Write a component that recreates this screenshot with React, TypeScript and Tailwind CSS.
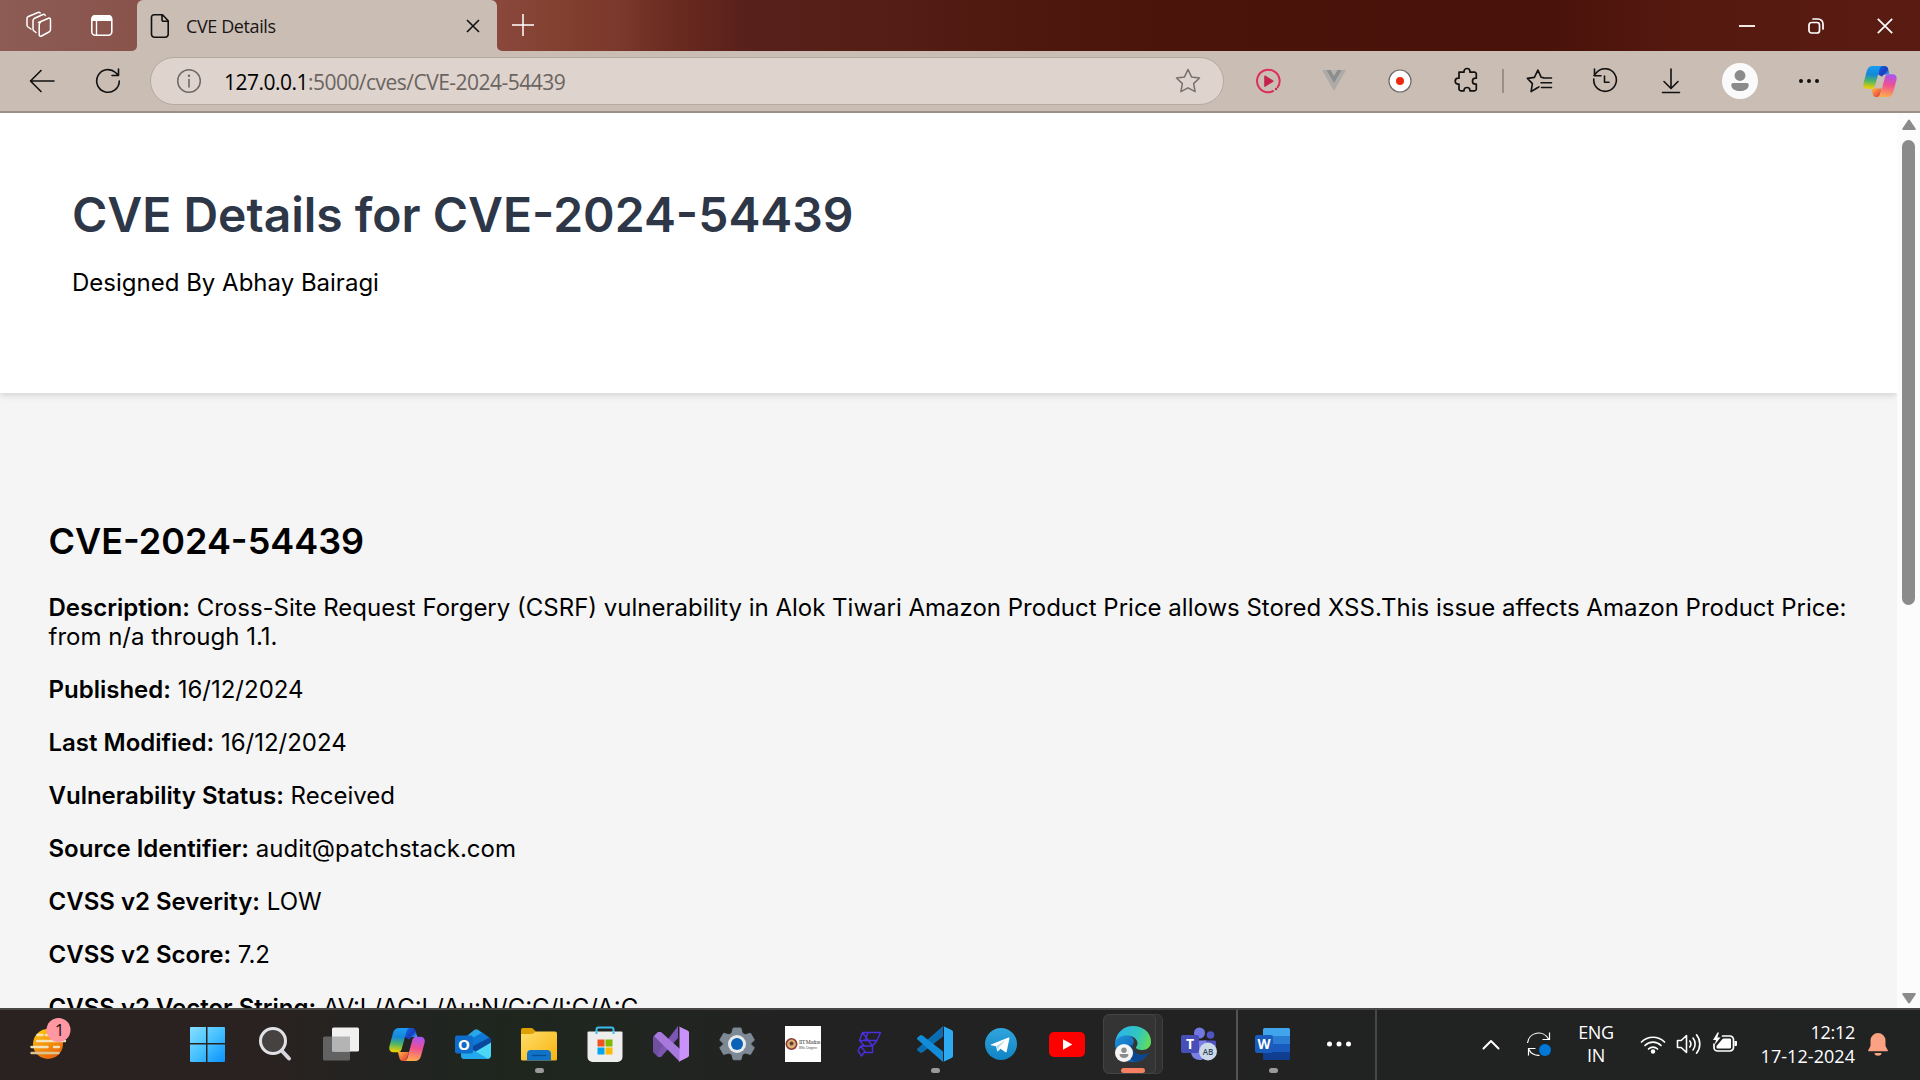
import React from 'react';

type SvgProps = { w: number; h: number; className?: string; children: React.ReactNode; box?: string };

function Svg({ w, h, className = '', children, box }: SvgProps) {
  return (
    <svg width={w} height={h} viewBox={box ?? `0 0 ${w} ${h}`} fill="none" className={`block shrink-0 ${className}`}>
      {children}
    </svg>
  );
}

const line = { strokeLinecap: 'round', strokeLinejoin: 'round' } as const;

function Copilot({ w, h, id, className }: { w: number; h: number; id: string; className?: string }) {
  return (
    <Svg w={w} h={h} box="0 0 36 33" className={className}>
      <defs>
        <linearGradient id={`${id}a`} x1="10" y1="1" x2="8" y2="24" gradientUnits="userSpaceOnUse">
          <stop offset="0" stopColor="#1a9bf0" />
          <stop offset="0.35" stopColor="#1487d8" />
          <stop offset="0.65" stopColor="#4fb566" />
          <stop offset="1" stopColor="#f5d000" />
        </linearGradient>
        <linearGradient id={`${id}b`} x1="28" y1="9" x2="24" y2="33" gradientUnits="userSpaceOnUse">
          <stop offset="0" stopColor="#a855f0" />
          <stop offset="0.45" stopColor="#ee4f94" />
          <stop offset="1" stopColor="#ffab4a" />
        </linearGradient>
        <linearGradient id={`${id}c`} x1="18" y1="1" x2="27" y2="9" gradientUnits="userSpaceOnUse">
          <stop offset="0" stopColor="#1260d8" />
          <stop offset="0.6" stopColor="#1a3cc0" />
          <stop offset="1" stopColor="#3aa8f5" />
        </linearGradient>
        <linearGradient id={`${id}d`} x1="10" y1="24" x2="18" y2="33" gradientUnits="userSpaceOnUse">
          <stop offset="0" stopColor="#ffb040" />
          <stop offset="1" stopColor="#e8363d" />
        </linearGradient>
      </defs>
      <path d="M17 0h6c2 0 3 1 3.600 3l1.700 6h-4.300c-2 0-3 .8-3.600 2.500L16 9z" fill={`url(#${id}c)`} />
      <path d="M9 24h8l3 0-2.500 7.500c-.4 1-1 1.500-2 1.500H14c-2 0-3-1-3.600-3z" fill={`url(#${id}d)`} />
      <path d="M10 0h11c-2 0-3 1.500-3.700 4l-4.600 17c-.6 2-1.700 3.300-4 3.300H4.500C1 24.300-.4 21.500.5 18L4 5C5 1.800 7 0 10 0z" fill={`url(#${id}a)`} />
      <path d="M26 33H15c2 0 3-1.500 3.700-4l4.600-17c.6-2 1.700-3.300 4-3.300h4.200c3.500 0 4.900 2.800 4 6.300l-3.500 13c-1 3.200-3 5-6 5z" fill={`url(#${id}b)`} />
    </Svg>
  );
}

function TabStrip() {
  return (
    <div className="flex h-[51px] w-full items-start bg-[linear-gradient(90deg,#8c5c55_0px,#89534b_137px,#8a483d_500px,#82402f_560px,#7b382c_620px,#69291f_680px,#57201a_750px,#541d15_900px,#4f180f_1020px,#4b140b_1180px,#48120a_1540px,#551910_1680px,#5a1c12_1920px)]">
      <Svg w={28} h={28} className="ml-[25px] mt-[11px]">
        <g stroke="#fff" strokeWidth="1.500" {...line}>
          <path d="M13.500 11.500l9.500-4a1.500 1.500 0 0 1 2.500 1.300v10c0 1-.6 1.700-1.500 2.200l-7.500 4a1.500 1.500 0 0 1-2.300-1.300v-9.800c0-1 .3-1.800 1.200-2.400z" />
          <path d="M11 21.500l-2-1.500c-.7-.5-1-1-1-2V9.500c0-1 .6-1.700 1.500-2.200L18 3.500c1-.5 2-.2 2.200 1" />
          <path d="M6 18l-3-2c-.7-.5-1-1-1-2V7.500c0-1 .5-1.600 1.400-2L13 1.500c1-.4 1.700-.2 2.200.5" />
        </g>
      </Svg>
      <Svg w={24} h={24} className="ml-[37px] mt-[13px]">
        <rect x="1.800" y="2.800" width="20" height="19.500" rx="3.500" stroke="#fff" strokeWidth="1.600" />
        <path d="M1.500 8V5.500a3.500 3.500 0 0 1 3.500-3.500h13.500a3.500 3.500 0 0 1 3.500 3.500V8z" fill="#fff" />
        <path d="M6.500 8v14" stroke="#fff" strokeWidth="1.400" />
      </Svg>
      <div className="ml-[18px] flex h-[51px] items-end">
        <Svg w={5} h={5}>
          <path d="M5 0v5H0a5 5 0 0 0 5-5z" fill="#cabdb4" />
        </Svg>
      </div>
      <div className="flex h-[51px] w-[360px] items-center rounded-t-[6px] bg-[#cabdb4]">
        <Svg w={20} h={26} className="ml-[13px]">
          <path d="M4 1.800h8.500l5.700 6v13.400a3 3 0 0 1-3 3H4.500a3 3 0 0 1-3-3V4.300A2.500 2.500 0 0 1 4 1.800z M12 2v4.500c0 1.200.7 1.800 1.800 1.800h4.200" stroke="#111" strokeWidth="1.600" {...line} />
        </Svg>
        <div className="ml-[16px] whitespace-nowrap font-['Open_Sans',sans-serif] text-[18px] leading-6 tracking-[-0.400px] text-[#181514]">CVE Details</div>
        <Svg w={14} h={14} className="ml-auto mr-[17px]">
          <path d="M1 1l12 12M13 1L1 13" stroke="#111" strokeWidth="1.600" />
        </Svg>
      </div>
      <div className="flex h-[51px] items-end">
        <Svg w={5} h={5}>
          <path d="M0 0v5h5a5 5 0 0 1-5-5z" fill="#cabdb4" />
        </Svg>
      </div>
      <Svg w={22} h={22} className="ml-[10px] mt-[14px]">
        <path d="M11 0v22M0 11h22" stroke="#fff" strokeWidth="1.500" />
      </Svg>
      <div className="ml-auto mr-[27px] mt-[17px] flex items-center">
        <Svg w={16} h={16}>
          <path d="M0 8h16" stroke="#fff" strokeWidth="1.800" />
        </Svg>
        <Svg w={17} h={17} className="ml-[53px]">
          <rect x="1" y="5.500" width="10.500" height="10.500" rx="2.500" stroke="#fff" strokeWidth="1.700" />
          <path d="M5 2h5a5 5 0 0 1 5 5v5" stroke="#fff" strokeWidth="1.700" strokeLinecap="round" />
        </Svg>
        <Svg w={16} h={16} className="ml-[52px]">
          <path d="M.8.8l14.400 14.400M15.200.8L.8 15.200" stroke="#fff" strokeWidth="1.700" />
        </Svg>
      </div>
    </div>
  );
}

function Toolbar() {
  return (
    <div className="flex h-[62px] w-full items-center border-b-2 border-[#9b8f88] bg-[#cabdb4]">
      <Svg w={26} h={24} className="ml-[29px]">
        <path d="M25 12H1.500M12 1.500L1.500 12 12 22.500" stroke="#111" strokeWidth="1.600" {...line} />
      </Svg>
      <Svg w={26} h={26} className="ml-[40px]">
        <path d="M24.300 13A11.300 11.300 0 1 1 20.500 4.500l2.500 2.500M23.500 1v6.500h-6.500" stroke="#111" strokeWidth="1.600" {...line} />
      </Svg>
      <div className="ml-[29px] flex h-[48px] w-[1074px] items-center rounded-full border border-[#b6a9a0] bg-[#ded3cd]">
        <Svg w={26} h={26} className="ml-[25px]">
          <circle cx="13" cy="13" r="11.300" stroke="#6f6965" strokeWidth="1.500" />
          <path d="M13 11.500v7.500" stroke="#6f6965" strokeWidth="1.600" strokeLinecap="round" />
          <circle cx="13" cy="7.800" r="1.200" fill="#6f6965" />
        </Svg>
        <div className="ml-[22px] mt-[1px] whitespace-nowrap font-['Open_Sans',sans-serif] text-[21px] leading-7 tracking-[-0.520px] text-[#6a6461]">
          <span className="text-black">127.0.0.1</span>:5000/cves/CVE-2024-54439
        </div>
        <Svg w={26} h={26} className="ml-auto mr-[22px]">
          <path d="M13 1.500l3.500 7.400 8 1.100-5.900 5.600 1.500 8.100L13 19.800l-7.100 3.900 1.500-8.100L1.500 10l8-1.100z" stroke="#77706c" strokeWidth="1.500" {...line} />
        </Svg>
      </div>
      <Svg w={26} h={26} className="ml-[31px]">
        <path d="M22.200 20A11.300 11.300 0 1 0 13 24.300c2 0 4-.5 5.800-1.600" stroke="#dc2f5a" strokeWidth="2" />
        <path d="M9.200 8v10.200c0 .6.500.8 1 .6l8-5c.5-.3.500-1 0-1.300l-8-5c-.5-.3-1 0-1 .5z" fill="#c4234f" />
        <circle cx="21" cy="21" r="1.200" fill="#c4234f" />
      </Svg>
      <Svg w={26} h={24} className="ml-[40px]">
        <path d="M1 1h24L13 22z" fill="#adaaa7" />
        <path d="M5.500 1h15L13 14z" fill="#8b8d8f" />
        <path d="M9.500 1h7L13 7z" fill="#bab3ad" />
      </Svg>
      <Svg w={24} h={24} className="ml-[41px]">
        <circle cx="12" cy="12" r="11" fill="#fff" stroke="#706965" strokeWidth="1.200" />
        <circle cx="12" cy="12" r="4" fill="#ee2b12" />
      </Svg>
      <Svg w={26} h={28} className="ml-[42px]">
        <path d="M5 5.200h5V4.500a3 3 0 0 1 6 0v.7h4.500a1.800 1.800 0 0 1 1.800 1.800v4.200h-.8a3 3 0 0 0 0 6h.8v4.800a1.800 1.800 0 0 1-1.800 1.800H16v-.3a3 3 0 0 0-6 0v.3H6.800A1.800 1.800 0 0 1 5 22v-4.800H4.200a3 3 0 0 1 0-6H5z" stroke="#111" strokeWidth="1.700" {...line} />
      </Svg>
      <div className="ml-[22px] h-6 w-[2px] bg-[#9b8f88]" />
      <Svg w={27} h={26} className="ml-[22px]">
        <path d="M17 9.600l-1.800-.3-3.300-7.200-3.500 7.300-7 1 5 5.200-1.300 8 6.300-3.800 1.500-1M17.500 10h8M15 14.800h10.500M15.500 19.500h10" stroke="#111" strokeWidth="1.600" {...line} />
      </Svg>
      <Svg w={26} h={26} className="ml-[39px]">
        <path d="M1.800 11a11.300 11.300 0 1 0 2.400-6L2 7.500M2.500 1v6.700H9M12.500 8v6.300h4.500" stroke="#111" strokeWidth="1.600" {...line} />
      </Svg>
      <Svg w={20} h={26} className="ml-[43px]">
        <path d="M10 1v19M3 13.500l7 7 7-7M1.500 24.500h17" stroke="#111" strokeWidth="1.600" {...line} />
      </Svg>
      <Svg w={36} h={36} className="ml-[41px]">
        <circle cx="18" cy="18" r="18" fill="#fbfafa" />
        <circle cx="18" cy="12.500" r="5.400" fill="#8b8b8b" />
        <path d="M11 20h14a1.700 1.700 0 0 1 1.700 1.700c0 4-3.500 6.300-8.700 6.300s-8.700-2.300-8.700-6.300A1.700 1.700 0 0 1 11 20z" fill="#8b8b8b" />
      </Svg>
      <Svg w={22} h={6} className="ml-[40px]">
        <circle cx="3" cy="3" r="2" fill="#111" />
        <circle cx="11" cy="3" r="2" fill="#111" />
        <circle cx="19" cy="3" r="2" fill="#111" />
      </Svg>
      <Copilot w={34} h={31} id="tb" className="ml-[43px]" />
    </div>
  );
}

const fields: [string, string][] = [
  ['Description:', 'Cross-Site Request Forgery (CSRF) vulnerability in Alok Tiwari Amazon Product Price allows Stored XSS.This issue affects Amazon Product Price: from n/a through 1.1.'],
  ['Published:', '16/12/2024'],
  ['Last Modified:', '16/12/2024'],
  ['Vulnerability Status:', 'Received'],
  ['Source Identifier:', 'audit@patchstack.com'],
  ['CVSS v2 Severity:', 'LOW'],
  ['CVSS v2 Score:', '7.2'],
  ['CVSS v2 Vector String:', 'AV:L/AC:L/Au:N/C:C/I:C/A:C'],
];

function Page() {
  return (
    <div className="flex h-[895px] w-full overflow-hidden">
      <main className="w-[1897px] bg-[#f5f5f5] font-['Inter',sans-serif] text-[24px] leading-[29px] text-black">
        <header className="h-[280px] bg-white px-[72px] pt-[73px] shadow-[0_3px_6px_rgba(0,0,0,0.12)]">
          <h1 className="whitespace-nowrap text-[48px] font-semibold leading-[58px] text-[#2d3748]">CVE Details for CVE-2024-54439</h1>
          <p className="mt-[24px]">Designed By Abhay Bairagi</p>
        </header>
        <section className="pl-[48.500px] pr-[48px] pt-[126px]">
          <h2 className="text-[36px] font-semibold leading-[44px]">CVE-2024-54439</h2>
          <div className="mt-[30px] flex flex-col gap-[24px]">
            {fields.map(([k, v]) => (
              <p key={k}>
                <strong className="font-semibold">{k}</strong> {v}
              </p>
            ))}
          </div>
        </section>
      </main>
      <div className="flex w-[23px] flex-col items-center bg-[#fcfcfc] pb-[4px] pt-[6px]">
        <Svg w={16} h={12}>
          <path d="M8 1.500l5.800 8.500H2.200z" fill="#8b8b8b" stroke="#8b8b8b" strokeWidth="2" {...line} />
        </Svg>
        <div className="mt-[9px] h-[465px] w-[13px] rounded-full bg-[#8b8b8b]" />
        <Svg w={16} h={12} className="mt-auto">
          <path d="M8 10.500L2.200 2h11.600z" fill="#8b8b8b" stroke="#8b8b8b" strokeWidth="2" {...line} />
        </Svg>
      </div>
    </div>
  );
}

function TaskItem({ children, dot }: { children: React.ReactNode; dot?: boolean }) {
  return (
    <div className="relative flex h-[70px] w-[66px] shrink-0 items-center justify-center pb-[2px]">
      {children}
      {dot && <div className="absolute bottom-[7px] left-[28.500px] h-[5px] w-[9px] rounded-full bg-[#9a9a9a]" />}
    </div>
  );
}

function Taskbar() {
  return (
    <div className="flex h-[72px] w-full items-start border-t-2 border-[#484746] bg-[linear-gradient(90deg,#2a2220_0px,#2a2220_250px,#222422_400px,#1e261e_520px,#212521_640px,#222222_800px,#212222_1920px)] font-['Open_Sans',sans-serif] text-white">
      <Svg w={44} h={44} className="ml-[29px] mt-[7px]">
        <defs>
          <linearGradient id="sun" x1="10" y1="12" x2="26" y2="42" gradientUnits="userSpaceOnUse">
            <stop stopColor="#ffc70f" />
            <stop offset="1" stopColor="#e85e0a" />
          </linearGradient>
        </defs>
        <circle cx="19" cy="27" r="15" fill="url(#sun)" />
        <g stroke="#f3e3b8" strokeWidth="2.400" strokeLinecap="round">
          <path d="M8.500 18h5M17 18h3M8 24h28M2.500 30h16M25 30h5" />
          <path d="M2.500 36h27" stroke="#dcc592" />
        </g>
        <circle cx="29.500" cy="13" r="12" fill="#ff98a2" />
        <text x="30.500" y="19" fontSize="17" textAnchor="middle" fill="#111" fontFamily="Open Sans">1</text>
      </Svg>
      <div className="ml-[101px] flex">
        <TaskItem>
          <Svg w={36} h={36}>
            <defs>
              <linearGradient id="win" x1="0" y1="0" x2="36" y2="36" gradientUnits="userSpaceOnUse">
                <stop stopColor="#8be0ff" />
                <stop offset="0.500" stopColor="#48c2ff" />
                <stop offset="1" stopColor="#0a91fb" />
              </linearGradient>
            </defs>
            <path d="M2 1h15v16H1V2a1 1 0 0 1 1-1zM18.500 1H35a1 1 0 0 1 1 1v15H18.500zM1 18.500h16V36H2a1 1 0 0 1-1-1zM18.500 18.500H36V35a1 1 0 0 1-1 1H18.500z" fill="url(#win)" />
          </Svg>
        </TaskItem>
        <div className="w-[2px]" />
        <TaskItem>
          <Svg w={34} h={36}>
            <circle cx="15" cy="15" r="12.500" fill="#454241" stroke="#e2e2e6" strokeWidth="3" />
            <path d="M24.500 25.500l6.500 7" stroke="#d5d6de" strokeWidth="4" strokeLinecap="round" />
          </Svg>
        </TaskItem>
        <TaskItem>
          <Svg w={36} h={36}>
            <rect x="0" y="10.500" width="27" height="24" rx="1.500" fill="#626262" />
            <rect x="9" y="1.500" width="27" height="24" rx="1.500" fill="#f1f1f1" />
            <path d="M9 10.500h18v15H10.500A1.500 1.500 0 0 1 9 24z" fill="#b5b4b4" />
          </Svg>
        </TaskItem>
        <TaskItem>
          <Copilot w={36} h={33} id="tk" />
        </TaskItem>
        <TaskItem>
          <Svg w={36} h={36}>
            <path d="M7 14L19.500 3.800c1.200-.9 2.300-.9 3.500 0l12 8.700-12 12H7z" fill="#28a8ea" />
            <path d="M12 15L27.500 6.500l7 5.500c1 1 1.500 2 1.500 3L18 27z" fill="#0f78d4" />
            <path d="M18 20L34.500 11.500c1 .7 1.500 1.700 1.500 3.500v2L18 28z" fill="#0a48a0" />
            <path d="M36 16.500V29a4 4 0 0 1-4 4H10a4 4 0 0 1-4-4v-3h14z" fill="#4bd8f8" />
            <path d="M6 26l12-2 15 8.800c-.4.200-.7.200-1 .2H10a4 4 0 0 1-4-4z" fill="#22a8ec" />
            <rect x="0" y="9.500" width="18" height="18" rx="2" fill="#0f6cc8" />
            <text x="9" y="24" fontSize="15" fontWeight="700" textAnchor="middle" fill="#fff" fontFamily="Open Sans">O</text>
          </Svg>
        </TaskItem>
        <TaskItem dot>
          <Svg w={36} h={36}>
            <defs>
              <linearGradient id="fold" x1="4" y1="4" x2="32" y2="36" gradientUnits="userSpaceOnUse">
                <stop stopColor="#ffdc68" />
                <stop offset="1" stopColor="#f7b511" />
              </linearGradient>
            </defs>
            <path d="M0 10V4a2 2 0 0 1 2-2h9l4.500 4v4z" fill="#dfa004" />
            <path d="M0 8h11c1.500 0 3-2.500 4.500-2.500H34a2 2 0 0 1 2 2V33a1.500 1.500 0 0 1-1.500 1.500h-33A1.500 1.500 0 0 1 0 33z" fill="url(#fold)" />
            <path d="M6 34.500V28a4 4 0 0 1 4-4h16a4 4 0 0 1 4 4v6.500z" fill="#1173c8" />
            <path d="M11.500 29.500h13" stroke="#0a4f96" strokeWidth="1.600" strokeLinecap="round" />
          </Svg>
        </TaskItem>
        <TaskItem>
          <Svg w={36} h={36}>
            <path d="M9.500 8V3.500a2 2 0 0 1 2-2h13a2 2 0 0 1 2 2V8" stroke="#37bdf0" strokeWidth="2" />
            <path d="M1.500 5.500h33a1 1 0 0 1 1 1V31a5 5 0 0 1-5 5h-25a5 5 0 0 1-5-5V6.500a1 1 0 0 1 1-1z" fill="#eee" />
            <path d="M9.500 8V5.500M26.500 8V5.500" stroke="#37bdf0" strokeWidth="2" />
            <path d="M10.500 13.500h7v7h-7z" fill="#f25022" />
            <path d="M18.500 13.500h7v7h-7z" fill="#7fba00" />
            <path d="M10.500 21.500h7v7h-7z" fill="#00a4ef" />
            <path d="M18.500 21.500h7v7h-7z" fill="#ffb900" />
          </Svg>
        </TaskItem>
        <TaskItem>
          <Svg w={36} h={36}>
            <path d="M0 11l5-5 5 3v18l-5 4-5-5z" fill="#6f4fa0" />
            <path d="M6 25L25 0v12L8 31H5z" fill="#7d55b3" />
            <path d="M5 6h3l19 17v13L1 10z" fill="#a779dc" />
            <path d="M25 0l9.500 4.500A2 2 0 0 1 36 6.500v23a2 2 0 0 1-1.200 1.800L25.500 36c.8-.5 1-1 1-2V2c0-1-.5-1.600-1.500-2z" fill="#c892fa" />
          </Svg>
        </TaskItem>
        <TaskItem>
          <Svg w={36} h={36}>
            <path d="M14 1.500h8l1.500 5.500 3 1.500 5.500-1.500 4 7-4 4 4 4-4 7-5.500-1.500-3 1.500-1.500 5.500h-8l-1.500-5.500-3-1.500L4 29l-4-7 4-4-4-4 4-7 5.500 1.500 3-1.500z" fill="#7d8995" stroke="#7d8995" strokeLinejoin="round" transform="translate(.8 .6) scale(.96)" />
            <circle cx="18" cy="18" r="9" fill="#e8ebee" />
            <circle cx="18" cy="18" r="6" fill="#0a61b6" />
          </Svg>
        </TaskItem>
        <TaskItem>
          <div className="flex h-[36px] w-[36px] items-center bg-white">
            <Svg w={36} h={16}>
              <circle cx="6.500" cy="8" r="5.200" fill="#d9b273" stroke="#873a32" strokeWidth="1.600" />
              <circle cx="6.500" cy="7.500" r="2" fill="#6a3c33" />
              <text x="14" y="8" fontSize="5.500" fill="#3c3535" fontFamily="Liberation Serif" textLength="21.500">IIT Madras</text>
              <text x="14" y="12.500" fontSize="3.800" fill="#6b6262" fontFamily="Liberation Sans" textLength="18">BSc Degree</text>
            </Svg>
          </div>
        </TaskItem>
        <TaskItem>
          <Svg w={26} h={28}>
            <path d="M6.500 2.500h18l-3.500 8H3.500zM3.500 10.500L8.500 16h8L21 10.500M6.500 2.500L16.500 16M12 2.500l-3 8M4.500 16h12v6.500H9M4.500 16l-2.500 4.500 3.500 5.500 3.500-4.500-4.500-5.500" stroke="#4a2fe0" strokeWidth="1.400" strokeLinejoin="round" />
          </Svg>
        </TaskItem>
        <TaskItem dot>
          <Svg w={36} h={36}>
            <path d="M26 0v10.500L5.500 26.500 3.500 27 .5 24.500c-.6-.6-.6-1.300 0-2z" fill="#0b6cb0" />
            <path d="M26 36V25.500L5.500 9.500 3.500 9 .5 11.500c-.6.600-.6 1.300 0 2z" fill="#118cd8" />
            <path d="M26 0l8.500 4c1 .5 1.500 1.200 1.500 2.300v23.400c0 1-.5 1.800-1.500 2.300L26 36c.6-.4 1-1 1-2V2c0-1-.4-1.600-1-2z" fill="#2cabf2" />
          </Svg>
        </TaskItem>
        <TaskItem>
          <Svg w={32} h={32}>
            <defs>
              <linearGradient id="tg" x1="16" y1="0" x2="16" y2="32" gradientUnits="userSpaceOnUse">
                <stop stopColor="#30a5dd" />
                <stop offset="1" stopColor="#1184c4" />
              </linearGradient>
            </defs>
            <circle cx="16" cy="16" r="16" fill="url(#tg)" />
            <path d="M6 16.500L23.500 9.500c.7-.2 1 .1.900.9l-2.700 13c-.2.900-.8 1-1.600.6l-4.500-3.300-2.400 2.400c-.5.400-.9.200-1-.4l-1.200-4.500L6 17.300c-.5-.2-.5-.6 0-.8z" fill="#fff" />
            <path d="M11.300 18.300l9.500-6.500-7.200 8-.3 3z" fill="#b7d8ea" />
          </Svg>
        </TaskItem>
        <TaskItem>
          <Svg w={36} h={25}>
            <rect width="36" height="25" rx="5" fill="#f00" />
            <path d="M14 7.300v10.400l9.300-5.200z" fill="#fff" />
          </Svg>
        </TaskItem>
        <TaskItem>
          <div className="absolute left-[10px] top-[4px] h-[60px] w-[53px] rounded-[6px] border border-[#3f3f3f] bg-[#303030]" />
          <div className="absolute left-[3px] top-[4px] h-[60px] w-[53px] rounded-[6px] border border-[#444] bg-[#343434]" />
          <div className="absolute bottom-[7px] left-[21px] h-[5px] w-[24px] rounded-full bg-[#f88062]" />
          <Svg w={36} h={36} className="relative">
            <defs>
              <linearGradient id="eg1" x1="2" y1="8" x2="36" y2="20" gradientUnits="userSpaceOnUse">
                <stop stopColor="#2bb5e8" />
                <stop offset="0.550" stopColor="#32c6c0" />
                <stop offset="1" stopColor="#67e04a" />
              </linearGradient>
              <linearGradient id="eg2" x1="0" y1="12" x2="20" y2="36" gradientUnits="userSpaceOnUse">
                <stop stopColor="#1f8fd8" />
                <stop offset="1" stopColor="#0f5bb0" />
              </linearGradient>
            </defs>
            <path d="M0 18C0 9 6 8 12 9c7 1.500 8 6 6 9-2 5 1 10 7 11 4 .5 6-1 8.500-2C30 33 25 36 18 36 8 36 0 28 0 18z" fill="url(#eg2)" />
            <path d="M12 24c-1 5 3 10 9 11.800C27 35 31 31 33.500 27c-9 4-17 0-16-8-3 0-5 2-5.500 5z" fill="#0b478f" />
            <path d="M.5 15C2 6 9 0 18 0c10.500 0 18 7 18 15.500 0 5.500-4 8.500-8.500 8.500-4 0-6.500-1-6.500-2.500 0-1 1.500-1.500 1.500-4 0-4-4-8-10.500-8C6 9.500 2 12 .5 15z" fill="url(#eg1)" />
            <circle cx="9" cy="27" r="9" fill="#f6f5f5" />
            <circle cx="9" cy="24.300" r="2.700" fill="#8c8c8c" />
            <path d="M5.300 28h7.400c.5 0 .8.300.8.800 0 2-2 3.200-4.500 3.200s-4.500-1.200-4.500-3.200c0-.5.300-.8.800-.8z" fill="#8c8c8c" />
          </Svg>
        </TaskItem>
        <TaskItem>
          <Svg w={36} h={36}>
            <circle cx="18.500" cy="7" r="5.500" fill="#7378e0" />
            <circle cx="29.500" cy="9" r="3.800" fill="#4f55c4" />
            <path d="M22 14.500h11.500a1.500 1.500 0 0 1 1.500 1.500v10l-9 4z" fill="#4c52c0" />
            <path d="M10 14.500h15.500v13c0 4-3 6.500-7 6.500s-8.500-3-8.500-8z" fill="#7b80e6" />
            <rect x="0" y="9" width="18" height="18" rx="2" fill="#484eb8" />
            <text x="9" y="23" fontSize="14" fontWeight="700" textAnchor="middle" fill="#fff" fontFamily="Open Sans">T</text>
            <circle cx="27" cy="25.500" r="9" fill="#ccd9e8" />
            <text x="27" y="28.500" fontSize="8" fontWeight="600" textAnchor="middle" fill="#31445a" fontFamily="Open Sans">AB</text>
          </Svg>
        </TaskItem>
      </div>
      <div className="ml-[4px] h-[70px] w-[2px] bg-[#545454]" />
      <div className="ml-[2px] flex">
        <TaskItem dot>
          <Svg w={36} h={36}>
            <path d="M8 3.500A1.500 1.500 0 0 1 9.500 2h24A1.500 1.500 0 0 1 35 3.500V10H8z" fill="#41a5ee" />
            <path d="M8 10h27v8H8z" fill="#2b7cd3" />
            <path d="M8 18h27v8H8z" fill="#185abd" />
            <path d="M8 26h27v6.500a1.500 1.500 0 0 1-1.500 1.500h-24A1.500 1.500 0 0 1 8 32.500z" fill="#103f91" />
            <rect x="0" y="9" width="18" height="18" rx="2" fill="#1a5bbe" />
            <text x="9" y="23" fontSize="13.500" fontWeight="700" textAnchor="middle" fill="#fff" fontFamily="Open Sans">W</text>
          </Svg>
        </TaskItem>
        <TaskItem>
          <Svg w={26} h={6}>
            <circle cx="3.500" cy="3" r="2.500" fill="#fff" />
            <circle cx="13" cy="3" r="2.500" fill="#fff" />
            <circle cx="22.500" cy="3" r="2.500" fill="#fff" />
          </Svg>
        </TaskItem>
      </div>
      <div className="ml-[3px] h-[70px] w-[2px] bg-[#484848]" />
      <div className="ml-[105px] flex h-[68px] items-center">
        <Svg w={18} h={11}>
          <path d="M1.500 9.500L9 2l7.500 7.500" stroke="#fff" strokeWidth="2" {...line} />
        </Svg>
        <Svg w={26} h={26} className="ml-[26px]">
          <path d="M1.500 12A11.200 11.200 0 0 1 22.500 8M23.500 1.500v7h-7M2.500 24.500v-7h7M3 18.500c1.500 4 6 6.300 10.500 5.800" stroke="#fff" strokeWidth="1.200" />
          <circle cx="19" cy="19" r="6" fill="#0078d7" />
        </Svg>
        <div className="ml-[22px] w-[44px] text-center text-[18px] leading-[23px] tracking-[-0.400px]">
          <div>ENG</div>
          <div>IN</div>
        </div>
        <Svg w={26} h={20} className="ml-[22px]">
          <path d="M1.500 8a16.300 16.300 0 0 1 23 0M5 11.500a11.300 11.300 0 0 1 16 0M8.500 15a6.400 6.400 0 0 1 9 0" stroke="#fff" strokeWidth="1.700" strokeLinecap="round" />
          <circle cx="13" cy="17.500" r="2.200" fill="#fff" />
        </Svg>
        <Svg w={26} h={22} className="ml-[10px]">
          <path d="M1.500 7.500h3.700L10.500 2.500v17L5.200 14.500H1.500z" stroke="#fff" strokeWidth="1.600" {...line} />
          <path d="M13.800 8a5 5 0 0 1 0 6M17 5a9.500 9.500 0 0 1 0 12M20.500 1.800a14.500 14.500 0 0 1 0 18.400" stroke="#fff" strokeWidth="1.600" strokeLinecap="round" />
        </Svg>
        <Svg w={26} h={22} className="mb-[2px] ml-[10px]">
          <path d="M10.500 4H18a3.500 3.500 0 0 1 3.500 3.500v8A3.500 3.500 0 0 1 18 19H5.500A3.500 3.500 0 0 1 2 15.500V12" stroke="#fff" strokeWidth="1.700" strokeLinecap="round" />
          <path d="M11 6.500h7a1 1 0 0 1 1 1v8a1 1 0 0 1-1 1H5.500a1 1 0 0 1-1-1V14z" fill="#fff" />
          <path d="M22.500 9h1.500c.6 0 1 .4 1 1v3c0 .6-.4 1-1 1h-1.500zM5.500.5L1 8h3L2.500 13 8.500 5.500H5.300L7 .5z" fill="#fff" />
        </Svg>
      </div>
      <div className="ml-auto mt-[10px] whitespace-nowrap text-right text-[18px] leading-[24px]">
        <div className="tracking-[-0.300px]">12:12</div>
        <div className="tracking-[0.050px]">17-12-2024</div>
      </div>
      <Svg w={22} h={26} className="ml-[12px] mr-[31px] mt-[22px]">
        <path d="M11 1a7.500 7.500 0 0 1 7.500 7.500V14l2.300 4.200c.3.600 0 1.100-.6 1.100H1.800c-.6 0-.9-.5-.6-1.100L3.500 14V8.500A7.500 7.500 0 0 1 11 1z" fill="#faa282" />
        <path d="M7.500 21h7a3.500 2.800 0 0 1-7 0z" fill="#faa282" />
      </Svg>
    </div>
  );
}

export default function App() {
  return (
    <div className="flex h-[1080px] w-[1920px] flex-col overflow-hidden bg-white">
      <TabStrip />
      <Toolbar />
      <Page />
      <Taskbar />
    </div>
  );
}
